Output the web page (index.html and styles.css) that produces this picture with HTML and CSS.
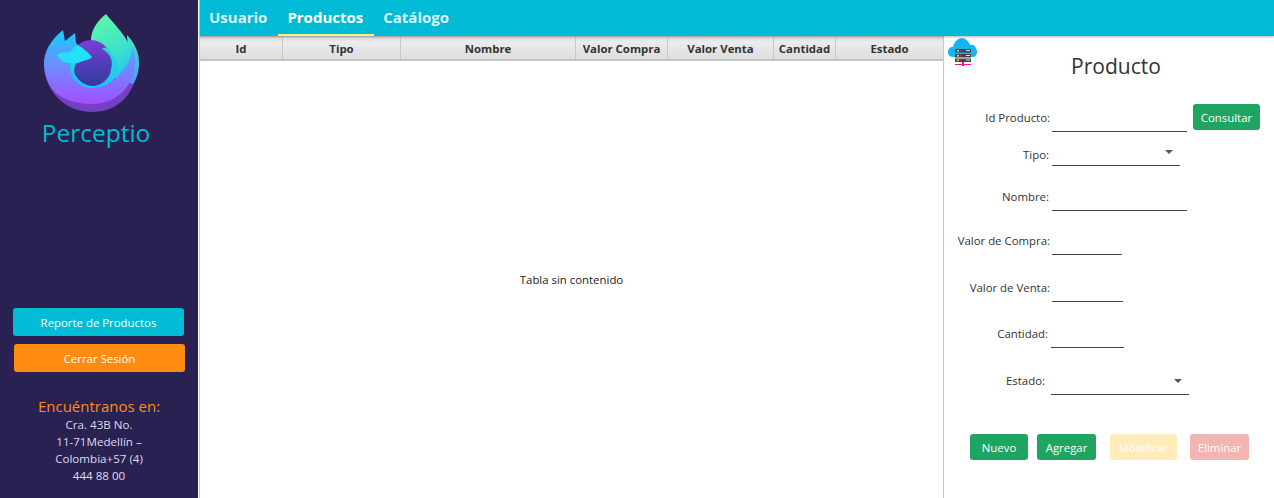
FILE: index.html
```html
<!DOCTYPE html>
<html lang="es">
<head>
    <meta charset="UTF-8">
    <title>Perceptio - Productos</title>
    <link rel="stylesheet" href="styles.css">
</head>
<body>
    <div class="app">
        <aside class="sidebar">
            <svg class="logo" viewBox="40 10 104 106" width="104" height="106">
                <defs>
                    <linearGradient id="ring" x1="0" y1="0" x2="0" y2="1">
                        <stop offset="0" stop-color="#0fd0ff"/>
                        <stop offset="0.45" stop-color="#6a90ff"/>
                        <stop offset="1" stop-color="#a24fff"/>
                    </linearGradient>
                    <linearGradient id="flame" x1="0.3" y1="0" x2="0.7" y2="1">
                        <stop offset="0" stop-color="#5cf7a8"/>
                        <stop offset="0.6" stop-color="#3ee0cf"/>
                        <stop offset="1" stop-color="#1cc4f2"/>
                    </linearGradient>
                    <linearGradient id="tail" x1="0.5" y1="0" x2="0.5" y2="1">
                        <stop offset="0" stop-color="#45e6c0"/>
                        <stop offset="1" stop-color="#4a9cf5"/>
                    </linearGradient>
                    <linearGradient id="globe" x1="0" y1="0" x2="0" y2="1">
                        <stop offset="0" stop-color="#7a3fd6"/>
                        <stop offset="1" stop-color="#2f3a9e"/>
                    </linearGradient>
                    <linearGradient id="hook" x1="0.6" y1="0" x2="0.4" y2="1">
                        <stop offset="0" stop-color="#2ad6dc"/>
                        <stop offset="1" stop-color="#19c4f5"/>
                    </linearGradient>
                </defs>
                <path d="M44 63 C44 92 66 112 92 112 C116 112 132 96 136 76 L92 60 Z" fill="#7440c8"/>
                <path d="M127 35 C134 42 139 52 139 62 C139 72 137 78 133 84 L120 80 L128 50 Z" fill="url(#tail)"/>
                <path d="M106 14 C110 20 124 32 130 47 C134 56 134 64 131 70 L118 82 L95 50 L91 40 C91 30 98 20 106 14 Z" fill="url(#flame)"/>
                <path d="M63 30 L65 41 L75 33 L76 43 L92 57 L72 70 L82 85 L92 87 C102 87 114 82 120 74 C126 68 131 58 133 48 C136 56 136 66 133 76 C126 94 110 104 92 104 C74 104 60 98 53 90 C47 83 44 73 44 63 C44 53 50 40 63 30 Z" fill="url(#ring)"/>
                <ellipse cx="91" cy="63" rx="21" ry="23" fill="url(#globe)"/>
                <path d="M102 49 C104 47 106 48 108 49 C114 54 118 62 119 71 C116 80 106 88 92 88 C84 88 76 84 72 76 C70 72 70 67 70 63 L78 60 C74 66 73 72 76 76 C80 83 88 86 93 86 C104 86 112 76 112 64 C112 57 108 52 102 49 Z" fill="url(#hook)"/>
                <path d="M57 55 C62 52 66 53 70 52 C73 49 75 46 78 45 C83 48 89 53 92 57 C90 60 84 60 78 63 C74 63 72 64 70 63 C64 63 60 60 57 55 Z" fill="#22e2f8"/>
            </svg>
            <div class="brand">Perceptio</div>
            <div class="side-actions">
                <button class="side-btn btn-report">Reporte de Productos</button>
                <button class="side-btn btn-logout">Cerrar Sesión</button>
            </div>
            <div class="contact">
                <div class="contact-title">Encuéntranos en:</div>
                <div class="contact-line">Cra. 43B No.</div>
                <div class="contact-line">11-71Medellín –</div>
                <div class="contact-line">Colombia+57 (4)</div>
                <div class="contact-line">444 88 00</div>
            </div>
        </aside>

        <div class="content">
            <nav class="tabs">
                <div class="tab">Usuario</div>
                <div class="tab active">Productos</div>
                <div class="tab">Catálogo</div>
            </nav>
            <div class="workspace">
                <section class="table">
                    <div class="table-head">
                        <div class="col">Id</div>
                        <div class="col">Tipo</div>
                        <div class="col">Nombre</div>
                        <div class="col">Valor Compra</div>
                        <div class="col">Valor Venta</div>
                        <div class="col">Cantidad</div>
                        <div class="col">Estado</div>
                    </div>
                    <div class="table-empty">Tabla sin contenido</div>
                </section>

                <section class="panel">
                    <svg class="cloud" viewBox="0 0 30 28" width="30" height="28">
                        <path d="M5 19 C1 19 0 16 0 14 C0 11 2 9 5 9 C6 4 10 0 14 0 C18 0 21 4 22 7 C26 6 29 10 29 14 C29 17 27 19 24 19 Z" fill="#14b4f5"/>
                        <rect x="7" y="11" width="16" height="3.5" fill="#444"/>
                        <rect x="7" y="16" width="16" height="3.5" fill="#444"/>
                        <rect x="7" y="20.5" width="16" height="3.5" fill="#444"/>
                        <rect x="9" y="12" width="2" height="1.5" fill="#e8e04a"/>
                        <rect x="12" y="12" width="1" height="1.5" fill="#e0208c"/>
                        <rect x="18" y="12" width="4" height="1" fill="#ddd"/>
                        <rect x="9" y="17" width="2" height="1.5" fill="#e8e04a"/>
                        <rect x="12" y="17" width="1" height="1.5" fill="#e0208c"/>
                        <rect x="18" y="17" width="4" height="1" fill="#ddd"/>
                        <rect x="9" y="21.5" width="2" height="1.5" fill="#e8e04a"/>
                        <rect x="12" y="21.5" width="1" height="1.5" fill="#e0208c"/>
                        <rect x="18" y="21.5" width="4" height="1" fill="#ddd"/>
                        <rect x="7" y="26" width="16" height="1" fill="#e0208c"/>
                        <rect x="14" y="24" width="2" height="4" fill="#e0208c"/>
                    </svg>
                    <h1 class="panel-title">Producto</h1>

                    <div class="form">
                        <div class="row">
                            <label class="label">Id Producto:</label>
                            <div class="input w-135"></div>
                            <button class="btn btn-green btn-consult">Consultar</button>
                        </div>
                        <div class="row row-tipo">
                            <label class="label label-tipo label-low">Tipo:</label>
                            <div class="input select w-128"><span class="caret"></span></div>
                        </div>
                        <div class="row row-nombre">
                            <label class="label label-tipo">Nombre:</label>
                            <div class="input w-135"></div>
                        </div>
                        <div class="row row-compra">
                            <label class="label">Valor de Compra:</label>
                            <div class="input w-70"></div>
                        </div>
                        <div class="row row-venta">
                            <label class="label">Valor de Venta:</label>
                            <div class="input w-71"></div>
                        </div>
                        <div class="row row-cantidad">
                            <label class="label label-cantidad">Cantidad:</label>
                            <div class="input w-73"></div>
                        </div>
                        <div class="row row-estado">
                            <label class="label label-estado">Estado:</label>
                            <div class="input select w-138"><span class="caret"></span></div>
                        </div>
                    </div>

                    <div class="actions">
                        <button class="btn btn-green btn-nuevo">Nuevo</button>
                        <button class="btn btn-green btn-agregar">Agregar</button>
                        <button class="btn btn-yellow">Modificar</button>
                        <button class="btn btn-red">Eliminar</button>
                    </div>
                </section>
            </div>
        </div>
    </div>
</body>
</html>
```

FILE: styles.css
```css
* {
    box-sizing: border-box;
}
html, body {
    margin: 0;
    height: 100%;
    overflow: hidden;
}
body {
    font-family: "Open Sans", "Noto Sans", sans-serif;
    font-size: 11.4px;
    color: #333;
    background: #fff;
}
button {
    font-family: inherit;
    border: none;
    color: #fff;
    font-size: 11.4px;
    padding: 0;
    border-radius: 3px;
}
.app {
    display: flex;
    height: 498px;
}

/* barra lateral */
.sidebar {
    width: 198px;
    margin-right: 1px;
    background: #2a2153;
    display: flex;
    flex-direction: column;
    align-items: center;
}
.logo {
    display: block;
    margin-top: 10px;
    margin-left: -14px;
}
.brand {
    color: #00bcd4;
    font-size: 24.5px;
    line-height: 30px;
    margin-top: 2px;
    margin-left: -6px;
}
.side-actions {
    margin-top: 160px;
    margin-left: -1px;
    display: flex;
    flex-direction: column;
    gap: 8px;
}
.side-btn {
    width: 171px;
    height: 28px;
}
.btn-report {
    background: #00bcd4;
}
.btn-logout {
    background: #ff8c11;
    margin-left: 1px;
    margin-right: -1px;
}
.contact {
    margin-top: 25px;
    text-align: center;
    color: #dcdce6;
}
.contact-title {
    color: #ff8c11;
    font-size: 15px;
    line-height: 19px;
}
.contact-line {
    line-height: 17px;
    font-size: 11.6px;
}

/* contenido */
.content {
    flex: 1;
    display: flex;
    flex-direction: column;
    border-left: 1px solid #ccc;
    min-width: 0;
}
.tabs {
    height: 36px;
    background: #01bbd6;
    display: flex;
    box-shadow: 0 1px 2px rgba(0,0,0,0.3);
    position: relative;
}
.tab {
    color: #d8f5f9;
    font-size: 15px;
    font-weight: 700;
    line-height: 35px;
    padding: 0 11px 0 9px;
}
.tab.active {
    color: #fff;
    border-bottom: 2px solid #f6f28a;
}
.workspace {
    flex: 1;
    display: flex;
    min-height: 0;
}
.table {
    width: 744px;
    display: flex;
    flex-direction: column;
    border-right: 1px solid #c8c8c8;
}
.table-head {
    display: grid;
    grid-template-columns: 83px 118px 175px 92px 106px 62px 1fr;
    height: 25px;
    background: linear-gradient(#d4d4d4, #ececec 25%, #dedede);
    border-bottom: 2px solid #c4c4c4;
    padding-top: 1px;
}
.col {
    font-weight: 700;
    color: #333;
    text-align: center;
    line-height: 23px;
    border-right: 1px solid #c8c8c8;
}
.col:last-child {
    border-right: none;
}
.table-empty {
    flex: 1;
    display: flex;
    align-items: center;
    justify-content: center;
    color: #222;
}

/* panel de producto */
.panel {
    flex: 1;
    position: relative;
    padding-top: 16px;
}
.cloud {
    position: absolute;
    left: 4px;
    top: 2px;
}
.panel-title {
    margin: 0;
    font-size: 21px;
    font-weight: 400;
    line-height: 28px;
    color: #333;
    text-align: center;
    padding-left: 14px;
}
.form {
    margin-top: 24px;
}
.row {
    display: flex;
    align-items: stretch;
    height: 28px;
}
.label {
    width: 107px;
    text-align: right;
    line-height: 27px;
    white-space: nowrap;
    padding-right: 1px;
}
.label-tipo {
    padding-right: 2px;
}
.label-low {
    line-height: 33px;
}
.label-cantidad {
    width: 106px;
    padding-right: 2px;
}
.label-estado {
    width: 106px;
    padding-right: 5px;
}
.input {
    border-bottom: 1px solid #444;
    margin-left: 1px;
    position: relative;
}
.w-135 { width: 135px; }
.w-128 { width: 128px; }
.w-70 { width: 70px; }
.w-71 { width: 71px; }
.w-73 { width: 73px; }
.w-138 { width: 138px; }
.caret {
    position: absolute;
    right: 7px;
    top: 12px;
    border-left: 4.5px solid transparent;
    border-right: 4.5px solid transparent;
    border-top: 4.5px solid #555;
}
.row-tipo { margin-top: 6px; }
.row-nombre { margin-top: 17px; }
.row-compra { margin-top: 16px; }
.row-venta { margin-top: 19px; }
.row-cantidad { margin-top: 18px; }
.row-estado { margin-top: 19px; }
.btn {
    height: 26px;
}
.btn-consult {
    width: 67px;
    margin-left: 6px;
}
.btn-green {
    background: #1ea562;
}
.btn-yellow {
    background: #ffecb8;
    width: 67px;
    margin-left: 14px;
}
.btn-red {
    background: #f2b5b2;
    width: 59px;
    margin-left: 13px;
}
.actions {
    display: flex;
    margin-top: 39px;
    padding-left: 26px;
}
.btn-nuevo {
    width: 58px;
}
.btn-agregar {
    width: 59px;
    margin-left: 9px;
}
```
